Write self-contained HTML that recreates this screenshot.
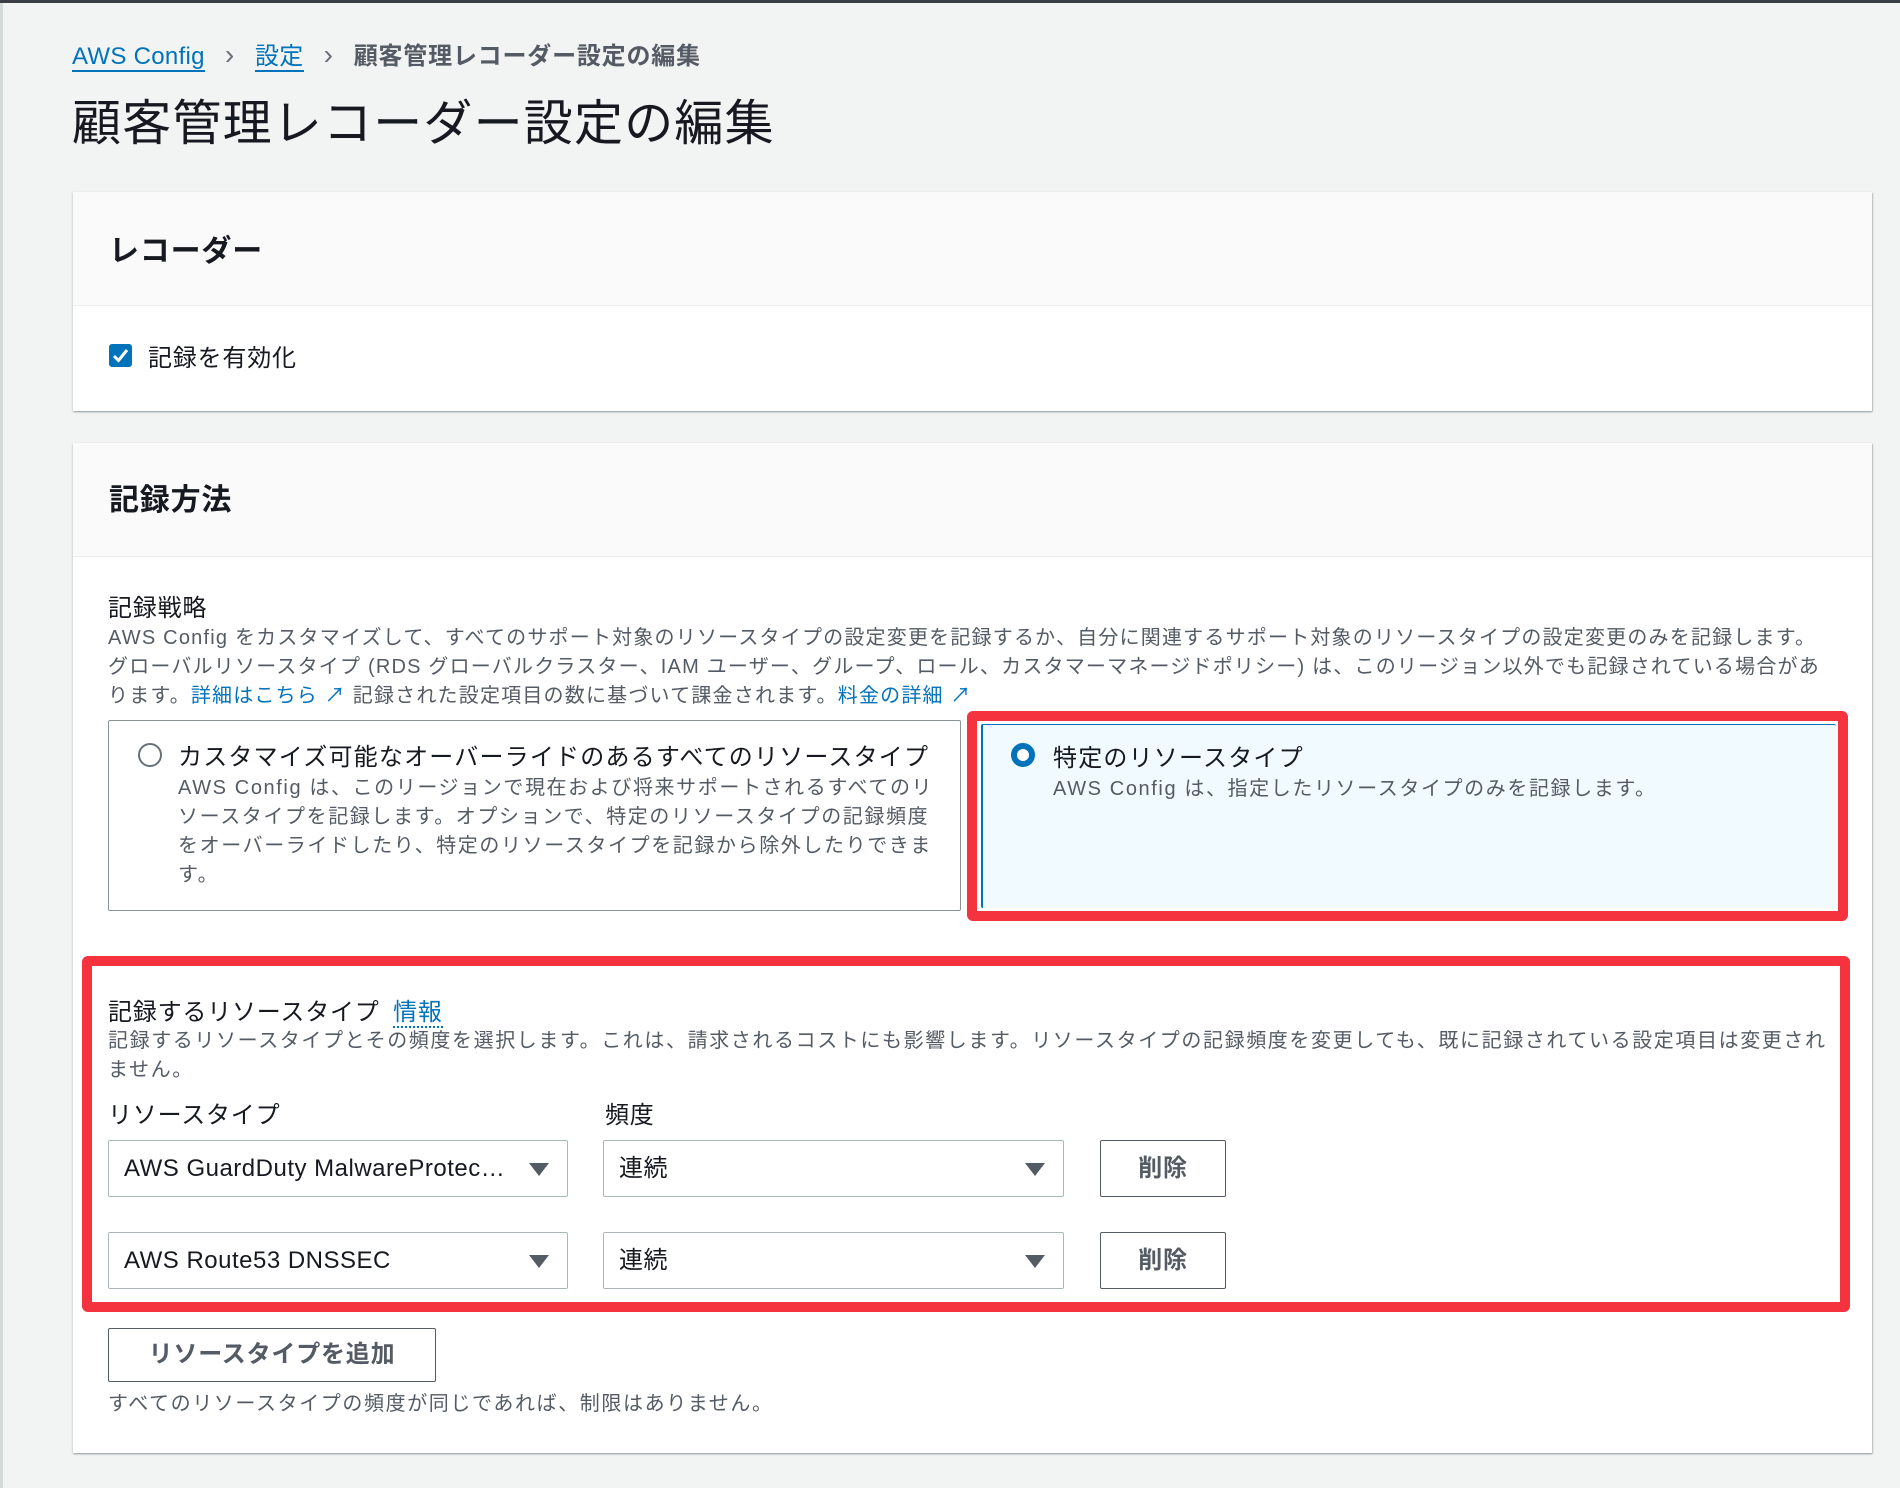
<!DOCTYPE html>
<html><head><meta charset="utf-8"><style>
*{box-sizing:border-box;margin:0;padding:0}
body{width:1900px;height:1488px;background:#f2f3f3;font-family:"Liberation Sans","Noto Sans CJK JP",sans-serif;color:#16191f;position:relative;overflow:hidden;box-shadow:inset 0 3px 0 #3b3f45,inset 3px 0 0 #d5dbdb;letter-spacing:0.8px}
.abs{position:absolute}
a{color:#0073bb;text-decoration:none}
.bc{left:72px;top:36px;font-size:24px;white-space:nowrap}
.bc a{border-bottom:2px solid #0073bb;letter-spacing:0.3px}
.bc .sep{color:#687078;margin:0 20px;font-size:28px}
.bc .cur{color:#545b64;font-weight:bold}
h1{position:absolute;left:72px;top:84px;font-size:49px;font-weight:normal;letter-spacing:1.2px}
.panel{position:absolute;left:73px;width:1799px;background:#fff;box-shadow:0 1px 2px rgba(0,28,36,.3),1px 1px 1px rgba(0,28,36,.15)}
.ph{background:#fafafa;border-bottom:1px solid #eaeded;position:relative}
.ph h2{position:absolute;left:36px;font-size:30px;font-weight:bold}
.small{font-size:20px;color:#545b64;line-height:29px;letter-spacing:1.6px}
.tile{position:absolute;border:1px solid #879596;border-radius:2px;background:#fff}
.radio{position:absolute;width:24px;height:24px;border-radius:50%;border:2px solid #687078;background:#fff}
.red{position:absolute;border:10px solid #f5333f;border-radius:6px}
.sel{position:absolute;height:57px;border:1px solid #aab7b8;border-radius:2px;background:#fff;font-size:24px;padding:0 15px;line-height:55px;letter-spacing:0.5px}
.sel::after{content:"";position:absolute;right:18px;top:22px;border-left:10px solid transparent;border-right:10px solid transparent;border-top:13px solid #545b64}
.btn{position:absolute;border:1px solid #545b64;border-radius:2px;background:#fff;font-size:24px;font-weight:bold;color:#545b64;text-align:center}
</style></head><body>
<div class="abs bc"><a>AWS Config</a><span class="sep">›</span><a>設定</a><span class="sep">›</span><span class="cur">顧客管理レコーダー設定の編集</span></div>
<h1>顧客管理レコーダー設定の編集</h1>

<div class="panel" style="top:192px;height:219px">
 <div class="ph" style="height:114px"><h2 style="top:34px">レコーダー</h2></div>
 <div class="abs" style="left:36px;top:152px;width:23px;height:23px;background:#0073bb;border-radius:3px"><svg width="23" height="23" viewBox="0 0 23 23"><path d="M5 12 L9.5 16.5 L18 6" stroke="#fff" stroke-width="3" fill="none"/></svg></div>
 <div class="abs" style="left:75px;top:146px;font-size:24px">記録を有効化</div>
</div>

<div class="panel" style="top:443px;height:1010px">
 <div class="ph" style="height:114px"><h2 style="top:32px">記録方法</h2></div>
</div>
<div class="abs" style="left:108px;top:588px;font-size:24px">記録戦略</div>
<div class="abs small" style="left:108px;top:624px;width:1760px;letter-spacing:1.2px;white-space:nowrap">AWS Config をカスタマイズして、すべてのサポート対象のリソースタイプの設定変更を記録するか、自分に関連するサポート対象のリソースタイプの設定変更のみを記録します。<br>グローバルリソースタイプ (RDS グローバルクラスター、IAM ユーザー、グループ、ロール、カスタマーマネージドポリシー) は、このリージョン以外でも記録されている場合があ<br>ります。<a>詳細はこちら ↗</a> 記録された設定項目の数に基づいて課金されます。<a>料金の詳細 ↗</a></div>

<div class="tile" style="left:108px;top:720px;width:853px;height:191px">
 <div class="radio" style="left:29px;top:22px"></div>
 <div class="abs" style="left:69px;top:16px;font-size:24px;white-space:nowrap;letter-spacing:1.2px">カスタマイズ可能なオーバーライドのあるすべてのリソースタイプ</div>
 <div class="abs small" style="left:69px;top:53px;width:760px">AWS Config は、このリージョンで現在および将来サポートされるすべてのリソースタイプを記録します。オプションで、特定のリソースタイプの記録頻度をオーバーライドしたり、特定のリソースタイプを記録から除外したりできます。</div>
</div>
<div class="red" style="left:967px;top:711px;width:881px;height:210px"></div>
<div class="tile" style="left:981px;top:724px;width:855px;height:184px;background:#f1faff;border-color:#0073bb;border-width:1px 0 0 2px">
 <div class="radio" style="left:28px;top:18px;border:6px solid #0073bb"></div>
 <div class="abs" style="left:70px;top:13px;font-size:24px;letter-spacing:1.2px">特定のリソースタイプ</div>
 <div class="abs small" style="left:70px;top:50px">AWS Config は、指定したリソースタイプのみを記録します。</div>
</div>

<div class="red" style="left:82px;top:956px;width:1768px;height:356px"></div>
<div class="abs" style="left:108px;top:992px;font-size:24px">記録するリソースタイプ <a style="border-bottom:2px dotted #0073bb;margin-left:6px">情報</a></div>
<div class="abs small" style="left:108px;top:1027px;width:1730px">記録するリソースタイプとその頻度を選択します。これは、請求されるコストにも影響します。リソースタイプの記録頻度を変更しても、既に記録されている設定項目は変更されません。</div>
<div class="abs" style="left:108px;top:1095px;font-size:24px">リソースタイプ</div>
<div class="abs" style="left:605px;top:1095px;font-size:24px">頻度</div>
<div class="sel" style="left:108px;top:1140px;width:460px">AWS GuardDuty MalwareProtec…</div>
<div class="sel" style="left:603px;top:1140px;width:461px">連続</div>
<div class="btn" style="left:1100px;top:1140px;width:126px;height:57px;line-height:55px">削除</div>
<div class="sel" style="left:108px;top:1232px;width:460px">AWS Route53 DNSSEC</div>
<div class="sel" style="left:603px;top:1232px;width:461px">連続</div>
<div class="btn" style="left:1100px;top:1232px;width:126px;height:57px;line-height:55px">削除</div>
<div class="btn" style="left:108px;top:1328px;width:328px;height:54px;line-height:52px">リソースタイプを追加</div>
<div class="abs small" style="left:108px;top:1390px">すべてのリソースタイプの頻度が同じであれば、制限はありません。</div>
</body></html>
